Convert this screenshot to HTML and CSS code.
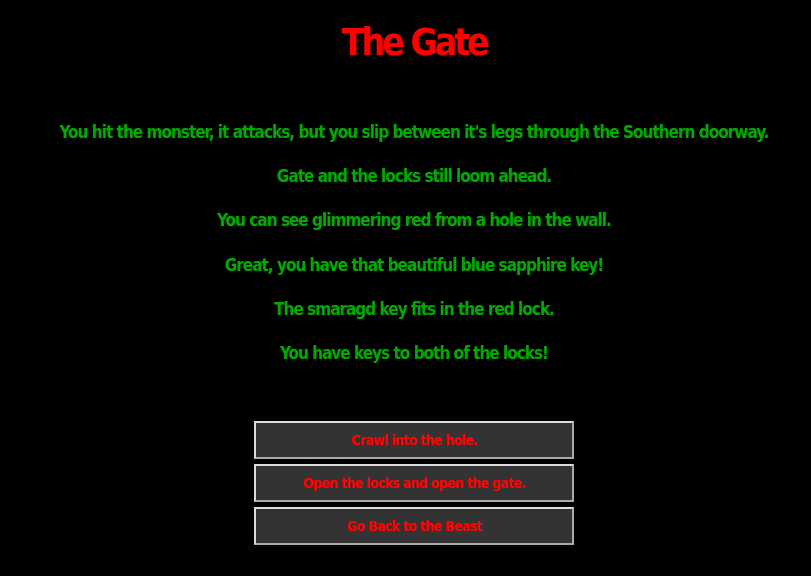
FILE: index.html
```html
<!DOCTYPE html>
<html>
<head>
<meta charset="utf-8">
<link rel="stylesheet" href="styles.css">
</head>
<body>
<div class="page">
  <h1 class="title">The Gate</h1>
  <div class="story">
    <p class="line">You hit the monster, it attacks, but you slip between it's legs through the Southern doorway.</p>
    <p class="line">Gate and the locks still loom ahead.</p>
    <p class="line">You can see glimmering red from a hole in the wall.</p>
    <p class="line">Great, you have that beautiful blue sapphire key!</p>
    <p class="line">The smaragd key fits in the red lock.</p>
    <p class="line">You have keys to both of the locks!</p>
  </div>
  <div class="choices">
    <button class="choice">Crawl into the hole.</button>
    <button class="choice">Open the locks and open the gate.</button>
    <button class="choice">Go Back to the Beast</button>
  </div>
</div>
</body>
</html>
```

FILE: styles.css
```css
html, body {
  margin: 0;
  padding: 0;
  background: #000;
}
.page {
  font-family: "DejaVu Sans Condensed", "DejaVu Sans", sans-serif;
  font-stretch: condensed;
  font-weight: bold;
  text-align: center;
  display: flex;
  flex-direction: column;
  align-items: center;
  padding-left: 17px;
}
.title {
  color: #f00;
  font-size: 37px;
  letter-spacing: -3px;
  line-height: 46px;
  margin: 20px 0 0 0;
}
.story {
  margin-top: 55px;
  display: flex;
  flex-direction: column;
  gap: 22.2px;
}
.line {
  color: #0a0;
  font-size: 17px;
  letter-spacing: -1px;
  line-height: 22px;
  margin: 0;
}
.choices {
  margin-top: 57px;
  display: flex;
  flex-direction: column;
  gap: 5px;
}
.choice {
  width: 320px;
  height: 38px;
  background: #333;
  color: #f00;
  font-family: inherit;
  font-stretch: condensed;
  font-weight: bold;
  font-size: 14px;
  letter-spacing: -0.7px;
  border: 2px solid;
  border-color: #ddd #aaa #aaa #ddd;
  padding: 0;
}
```
